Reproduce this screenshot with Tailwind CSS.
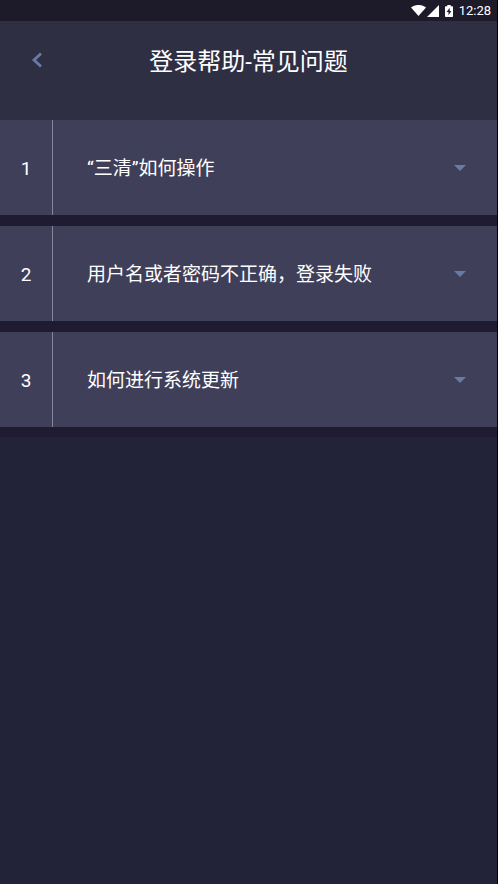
<!DOCTYPE html>
<html lang="zh-CN">
<head>
<meta charset="utf-8">
<meta name="viewport" content="width=device-width, initial-scale=1">
<title>登录帮助-常见问题</title>
<script src="https://cdn.jsdelivr.net/npm/@tailwindcss/browser@4"></script>
</head>
<body class="flex min-h-screen flex-col border-r border-black bg-[#222338] font-[Roboto,'Noto_Sans_CJK_SC',sans-serif] text-white">
  <div class="flex h-[21px] items-center justify-end bg-[#1d1a29] pr-[6px]">
    <svg class="h-[11px] w-[15px]" viewBox="0 0 15 11" fill="#fff" aria-hidden="true"><path d="M0 2.6C4.3-.9 10.7-.9 15 2.6L7.5 11Z"/></svg>
    <svg class="ml-px h-[12px] w-[12px]" viewBox="0 0 12 12" fill="#fff" aria-hidden="true"><path d="M12 0V12H0Z"/></svg>
    <svg class="ml-[6px] h-[12px] w-[8px]" viewBox="0 0 8 12" aria-hidden="true"><path fill="#fff" d="M2.3 0H5.7V1.2H7.2Q8 1.2 8 2V11.2Q8 12 7.2 12H.8Q0 12 0 11.2V2Q0 1.2 .8 1.2H2.3Z"/><path fill="#1d1a29" d="M4.7 2.8 1.6 7H3.5V10.3L6.4 6H4.7Z"/></svg>
    <time class="ml-[6px] text-[13px] leading-5">12:28</time>
  </div>

  <header class="grid h-[99px] grid-cols-[74px_1fr_74px] bg-[#2f2f44]">
    <button type="button" aria-label="返回" class="flex h-[78px] items-center justify-center">
      <svg class="h-4 w-3" viewBox="0 0 12 16" fill="none" stroke="#687ba5" stroke-width="2.8" aria-hidden="true"><path d="M10 1.4 3 8l7 6.6"/></svg>
    </button>
    <h1 class="flex h-[82px] items-center justify-center text-2xl whitespace-nowrap">登录帮助-常见问题</h1>
  </header>

  <main>
    <ol class="flex flex-col gap-[11px] bg-[#1f1c32] pb-[10px] text-[19px]">
      <li>
        <button type="button" aria-expanded="false" class="flex h-[95px] w-full items-stretch bg-[#403f5a] text-left">
          <span class="flex w-[53px] items-center justify-center border-r border-[#85849a] pt-[3px]">1</span>
          <span class="flex flex-1 items-center pt-[4px] pl-[34px]">“三清”如何操作</span>
          <span class="flex w-[74px] items-center justify-center"><svg class="h-[6px] w-[12px]" viewBox="0 0 12 6" fill="#687ba5" aria-hidden="true"><path d="M0 0H12L6 6Z"/></svg></span>
        </button>
      </li>
      <li>
        <button type="button" aria-expanded="false" class="flex h-[95px] w-full items-stretch bg-[#403f5a] text-left">
          <span class="flex w-[53px] items-center justify-center border-r border-[#85849a] pt-[3px]">2</span>
          <span class="flex flex-1 items-center pt-[4px] pl-[34px]">用户名或者密码不正确，登录失败</span>
          <span class="flex w-[74px] items-center justify-center"><svg class="h-[6px] w-[12px]" viewBox="0 0 12 6" fill="#687ba5" aria-hidden="true"><path d="M0 0H12L6 6Z"/></svg></span>
        </button>
      </li>
      <li>
        <button type="button" aria-expanded="false" class="flex h-[95px] w-full items-stretch bg-[#403f5a] text-left">
          <span class="flex w-[53px] items-center justify-center border-r border-[#85849a] pt-[3px]">3</span>
          <span class="flex flex-1 items-center pt-[4px] pl-[34px]">如何进行系统更新</span>
          <span class="flex w-[74px] items-center justify-center"><svg class="h-[6px] w-[12px]" viewBox="0 0 12 6" fill="#687ba5" aria-hidden="true"><path d="M0 0H12L6 6Z"/></svg></span>
        </button>
      </li>
    </ol>
  </main>
</body>
</html>
